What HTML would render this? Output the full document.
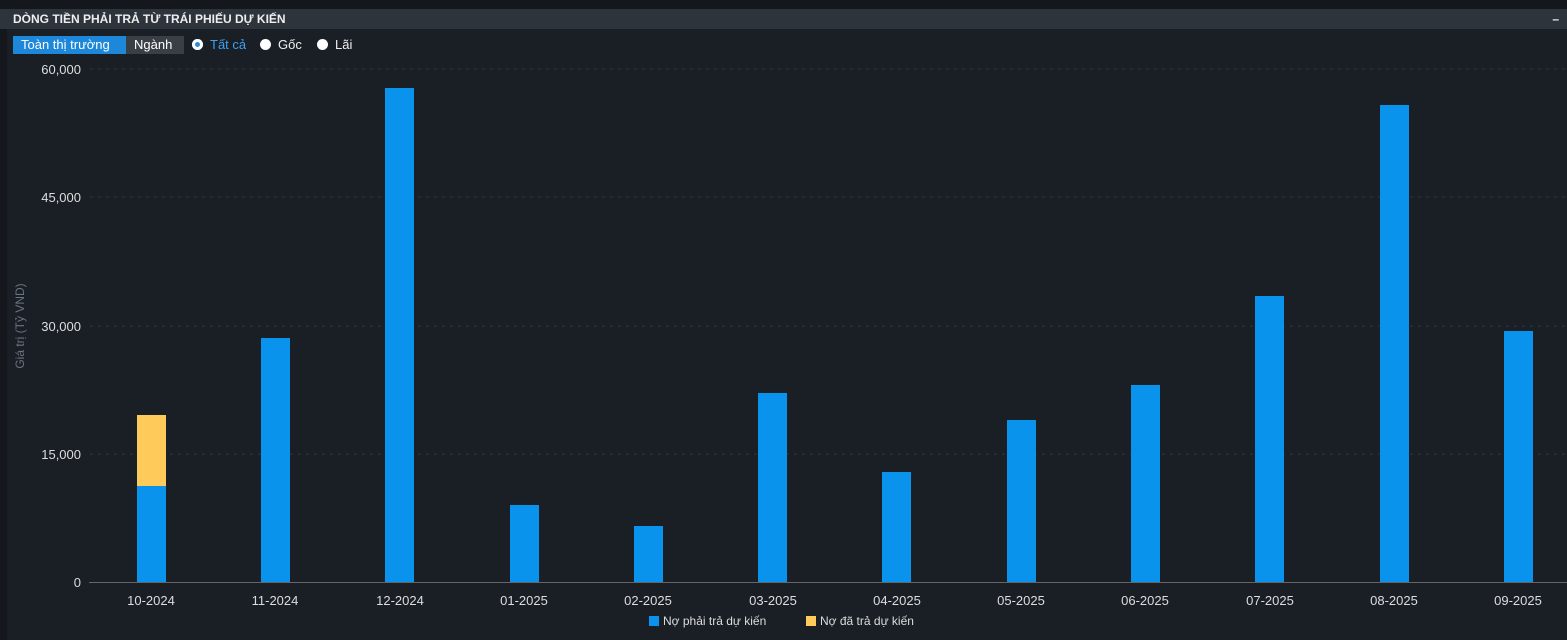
<!DOCTYPE html>
<html><head><meta charset="utf-8"><style>
*{margin:0;padding:0;box-sizing:border-box}
body{width:1567px;height:640px;background:#1a1f26;font-family:"Liberation Sans",sans-serif;position:relative;overflow:hidden;color:#ddd}
.top{position:absolute;left:0;top:0;width:1567px;height:9px;background:#14181d}
.hdr{position:absolute;left:0;top:9px;width:1567px;height:20px;background:#2e343c;color:#eee;font-weight:bold;font-size:12px;line-height:20px;padding-left:13px}
.hdr span{position:absolute;right:8px;top:0}
.lb{position:absolute;left:0;top:29px;width:7px;height:611px;background:#14181d}
.btn{position:absolute;top:36px;height:18px;font-size:13px;line-height:18px;padding:0 8px}
.r{position:absolute;top:37px;font-size:13px;line-height:15px}
.r i{display:inline-block;width:11px;height:11px;border-radius:50%;background:#fff;vertical-align:-1px;margin-right:7px}
svg{position:absolute;left:0;top:0}
</style></head><body>
<div class="top"></div>
<div class="hdr">DÒNG TIỀN PHẢI TRẢ TỪ TRÁI PHIẾU DỰ KIẾN<span>–</span></div>
<div class="lb"></div>
<div class="btn" style="left:13px;width:113px;background:#1d87d9;color:#fff">Toàn thị trường</div>
<div class="btn" style="left:126px;width:58px;background:#3a3f46;color:#fff">Ngành</div>
<div class="r" style="left:192px;color:#3ea0f0"><i style="background:#fff;box-shadow:inset 0 0 0 3px #fff,inset 0 0 0 6px #2a8be0"></i>Tất cả</div>
<div class="r" style="left:260px;color:#eee"><i></i>Gốc</div>
<div class="r" style="left:317px;color:#eee"><i></i>Lãi</div>
<svg width="1567" height="640" font-family="Liberation Sans, sans-serif" font-size="13">
<g stroke="#2c343c" stroke-dasharray="3 5">
<line x1="90" x2="1567" y1="69" y2="69"/><line x1="90" x2="1567" y1="197" y2="197"/><line x1="90" x2="1567" y1="326" y2="326"/><line x1="90" x2="1567" y1="454" y2="454"/></g>
<line x1="89" x2="1567" y1="582.5" y2="582.5" stroke="#666"/>
<g fill="#ddd" text-anchor="end"><text x="81" y="74">60,000</text><text x="81" y="202">45,000</text><text x="81" y="331">30,000</text><text x="81" y="459">15,000</text><text x="81" y="587">0</text></g>
<text transform="translate(24 326) rotate(-90)" fill="#6b737c" font-size="12" text-anchor="middle">Giá trị (Tỷ VND)</text>
<g fill="#0a93ec">
<rect x="137" y="486" width="29" height="96"/>
<rect x="261" y="338" width="29" height="244"/>
<rect x="385" y="88" width="29" height="494"/>
<rect x="510" y="505" width="29" height="77"/>
<rect x="634" y="526" width="29" height="56"/>
<rect x="758" y="393" width="29" height="189"/>
<rect x="882" y="472" width="29" height="110"/>
<rect x="1007" y="420" width="29" height="162"/>
<rect x="1131" y="385" width="29" height="197"/>
<rect x="1255" y="296" width="29" height="286"/>
<rect x="1380" y="105" width="29" height="477"/>
<rect x="1504" y="331" width="29" height="251"/>
</g>
<rect x="137" y="415" width="29" height="71" fill="#fecb5a"/>
<g fill="#ddd" text-anchor="middle">
<text x="151" y="605">10-2024</text><text x="275" y="605">11-2024</text><text x="400" y="605">12-2024</text><text x="524" y="605">01-2025</text><text x="648" y="605">02-2025</text><text x="773" y="605">03-2025</text><text x="897" y="605">04-2025</text><text x="1021" y="605">05-2025</text><text x="1145" y="605">06-2025</text><text x="1270" y="605">07-2025</text><text x="1394" y="605">08-2025</text><text x="1518" y="605">09-2025</text></g>
<rect x="649" y="616" width="10" height="10" fill="#0a93ec"/>
<text x="663" y="625" fill="#ddd" font-size="12">Nợ phải trả dự kiến</text>
<rect x="806" y="616" width="10" height="10" fill="#fecb5a"/>
<text x="820" y="625" fill="#ddd" font-size="12">Nợ đã trả dự kiến</text>
</svg>
</body></html>
